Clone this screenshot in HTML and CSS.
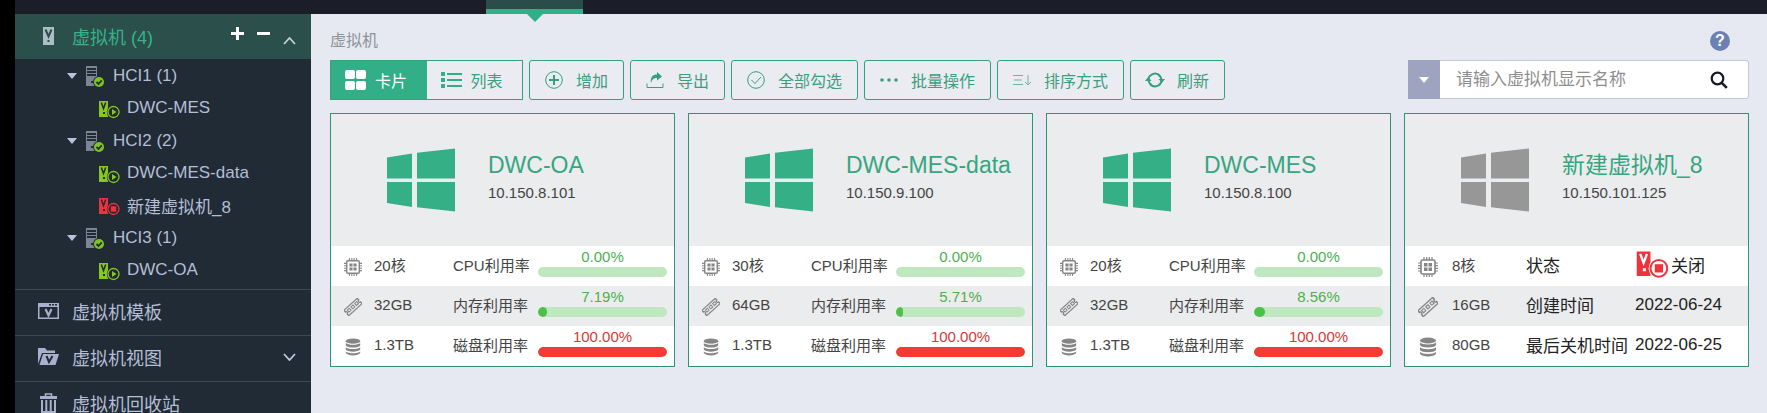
FILE: index.html
```html
<!DOCTYPE html>
<html lang="zh-CN">
<head>
    <meta charset="utf-8" />
    <title>虚拟机</title>
    <link rel="stylesheet" href="styles.css">
</head>
<body>
    <svg class="defs" aria-hidden="true">
        <symbol id="i-host" viewBox="0 0 20 22">
            <path fill="#7c8594" d="M1 0h11v20H1z" />
            <path fill="#212b35" d="M2 2h9v2H2zM2 5h9v2H2zM2 8h9v2H2zM6 15h2v2H6z" />
            <circle cx="14" cy="16" r="6" fill="#212b35" />
            <circle cx="14" cy="16" r="5" fill="#7dc41f" />
            <path fill="none" stroke="#212b35" stroke-width="1.8" d="M11.5 16l2 2 3.2-3.6" />
        </symbol>
        <symbol id="i-vm" viewBox="0 0 22 19">
            <path fill="currentColor" d="M1 1h9v16H1z" />
            <path fill="none" stroke="var(--hole)" stroke-width="1.5" d="M3.300 2.500l2.200 6 2.200-6" />
            <path fill="var(--hole)" d="M5 12h2v2H5z" />
            <circle cx="15.500" cy="12" r="6.700" fill="var(--hole)" />
            <circle cx="15.500" cy="12" r="5.500" fill="none" stroke="currentColor" stroke-width="1.300" />
        </symbol>
        <symbol id="i-vm-on" viewBox="0 0 22 19">
            <use href="#i-vm" width="22" height="19" />
            <path fill="currentColor" d="M14 9l4.500 3-4.500 3z" />
        </symbol>
        <symbol id="i-vm-off" viewBox="0 0 22 19">
            <use href="#i-vm" width="22" height="19" />
            <path fill="currentColor" d="M12.800 9.300h5.400v5.400h-5.400z" />
        </symbol>
        <symbol id="i-win" viewBox="0 0 68 63">
            <path fill="currentColor" d="M0 9l25-4v25H0zM30 4.300L68 0v30H30zM0 33.500h25v25L0 54.500zM30 33.500h38V63l-38-4.300z" />
        </symbol>
        <symbol id="i-cpu" viewBox="0 0 20 20">
            <rect x="3" y="3" width="14" height="14" rx="1.500" fill="none" stroke="currentColor" stroke-width="1.600" />
            <path fill="currentColor" d="M6 6h3.500v3.500H6zM10.500 6H14v3.500h-3.500zM6 10.500h3.500V14H6zM10.500 10.500H14V14h-3.500z" />
            <path stroke="currentColor" stroke-width="1.200" d="M6 0v3M8.700 0v3M11.300 0v3M14 0v3M6 17v3M8.700 17v3M11.300 17v3M14 17v3M0 6h3M0 8.700h3M0 11.300h3M0 14h3M17 6h3M17 8.700h3M17 11.300h3M17 14h3" />
        </symbol>
        <symbol id="i-mem" viewBox="0 0 20 20">
            <g transform="rotate(-42 10 10)" fill="none" stroke="currentColor">
                <path stroke-width="1.400" d="M0 6h20v2.500a1.500 1.500 0 0 0 0 3V14H0v-2.500a1.500 1.500 0 0 0 0-3z" />
                <path stroke-width="1.100" d="M3 8.300h3v3H3zM8.500 8.300h3v3h-3zM14 8.300h3v3h-3z" />
            </g>
        </symbol>
        <symbol id="i-disk" viewBox="0 0 20 20">
            <ellipse cx="10" cy="3.500" rx="8" ry="3" fill="currentColor" />
            <path fill="currentColor" d="M2 5.500c2 2.600 14 2.600 16 0v2.700c-2 3-14 3-16 0zM2 10.200c2 2.600 14 2.600 16 0v2.700c-2 3-14 3-16 0zM2 15c2 2.600 14 2.600 16 0v1.800c-2 3.600-14 3.600-16 0z" />
        </symbol>
    </svg>

    <header class="topbar">
        <div class="topbar-tab"></div>
    </header>

    <div class="layout">
        <nav class="sidebar">
            <div class="side-head">
                <svg class="side-icon" viewBox="0 0 21 20">
                    <path fill="#a9bfc4" d="M5 1h11v18H5z" />
                    <path fill="none" stroke="#2c4e4a" stroke-width="2" d="M7.500 3.500l3 7 3-7" />
                    <path fill="#2c4e4a" d="M9.500 14h2v2h-2z" />
                </svg>
                <a class="side-title" href="#">虚拟机 (4)</a>
                <div class="side-tools">
                    <button type="button" aria-label="展开">
                        <svg width="13" height="13" viewBox="0 0 13 13"><path stroke="#fff" stroke-width="3" d="M0 6.500h13M6.500 0v13" /></svg>
                    </button>
                    <button type="button" aria-label="收起">
                        <svg width="13" height="13" viewBox="0 0 13 13"><path stroke="#fff" stroke-width="3" d="M0 6.500h13" /></svg>
                    </button>
                    <button type="button" class="fold" aria-label="折叠">
                        <svg width="13" height="8" viewBox="0 0 13 8"><path fill="none" stroke="#c4d2d6" stroke-width="1.800" d="M1 7l5.500-6L12 7" /></svg>
                    </button>
                </div>
            </div>
            <ul class="tree">
                <li>
                    <a class="host" href="#"><span class="caret"></span><svg class="host-icon"><use href="#i-host" /></svg>HCI1 (1)</a>
                    <ul>
                        <li><a class="vm" href="#"><svg class="vm-icon on"><use href="#i-vm-on" /></svg>DWC-MES</a></li>
                    </ul>
                </li>
                <li>
                    <a class="host" href="#"><span class="caret"></span><svg class="host-icon"><use href="#i-host" /></svg>HCI2 (2)</a>
                    <ul>
                        <li><a class="vm" href="#"><svg class="vm-icon on"><use href="#i-vm-on" /></svg>DWC-MES-data</a></li>
                        <li><a class="vm" href="#"><svg class="vm-icon off"><use href="#i-vm-off" /></svg>新建虚拟机_8</a></li>
                    </ul>
                </li>
                <li>
                    <a class="host" href="#"><span class="caret"></span><svg class="host-icon"><use href="#i-host" /></svg>HCI3 (1)</a>
                    <ul>
                        <li><a class="vm" href="#"><svg class="vm-icon on"><use href="#i-vm-on" /></svg>DWC-OA</a></li>
                    </ul>
                </li>
            </ul>
            <a class="side-item" href="#">
                <svg class="side-icon" viewBox="0 0 21 20">
                    <path fill="#a7b1cb" fill-rule="evenodd" d="M0 2h21v16H0zM1.500 6v10.500h18V6z" />
                    <path fill="#212b35" d="M11 3h2v1.500h-2zM14 3h2v1.500h-2zM17 3h2v1.500h-2z" />
                    <path fill="none" stroke="#a7b1cb" stroke-width="2.200" d="M7.500 8l3 6.500 3-6.500" />
                </svg>
                虚拟机模板
            </a>
            <a class="side-item" href="#">
                <svg class="side-icon" viewBox="0 0 21 20">
                    <path fill="#a7b1cb" d="M0 17V1h7l2 2.500h8V6H4z" />
                    <path fill="#a7b1cb" d="M5 7h16l-3.500 11H1.500z" />
                    <path fill="none" stroke="#212b35" stroke-width="2" d="M8.500 9l2.500 6 3.500-6" />
                </svg>
                虚拟机视图
                <svg class="side-arrow" width="13" height="8" viewBox="0 0 13 8"><path fill="none" stroke="#c0c9dc" stroke-width="1.800" d="M1 1l5.500 6L12 1" /></svg>
            </a>
            <a class="side-item" href="#">
                <svg class="side-icon" viewBox="0 0 21 20">
                    <path fill="none" stroke="#a7b1cb" stroke-width="1.600" d="M7.500 3V1h6v2" />
                    <path fill="#a7b1cb" d="M2 3h17v3H2z" />
                    <path fill="none" stroke="#a7b1cb" stroke-width="2" d="M4 7v12h13V7M8.300 7v11M12.700 7v11" />
                </svg>
                虚拟机回收站
            </a>
        </nav>

        <main class="main">
            <div class="crumb">
                <span class="crumb-text">虚拟机</span>
                <button type="button" class="help" aria-label="帮助">?</button>
            </div>

            <div class="toolbar">
                <div class="view-switch">
                    <button type="button" class="view active">
                        <svg viewBox="0 0 21 20"><rect width="10" height="9" rx="2" /><rect x="11" width="10" height="9" rx="2" /><rect y="11" width="10" height="9" rx="2" /><rect x="11" y="11" width="10" height="9" rx="2" /></svg>
                        卡片
                    </button>
                    <button type="button" class="view">
                        <svg viewBox="0 0 21 20"><path d="M0 2h4v4H0zM0 8h4v4H0zM0 14h4v4H0zM6 3h15v2H6zM6 9h15v2H6zM6 15h15v2H6z" /></svg>
                        列表
                    </button>
                </div>
                <button type="button" class="btn">
                    <svg viewBox="0 0 20 20"><g class="line"><circle cx="10" cy="10" r="8.300" /><path d="M5 10h10M10 5v10" stroke-width="2" /></g></svg>
                    增加
                </button>
                <button type="button" class="btn">
                    <svg viewBox="0 0 20 20"><path d="M6 13c-1-6 2-8.500 6-8.500V2l5 4.500-5 4V8c-3 0-5 1-6 5z" /><path class="line" d="M2 13.500v4h16v-4" /></svg>
                    导出
                </button>
                <button type="button" class="btn">
                    <svg viewBox="0 0 20 20"><g class="line"><circle cx="10" cy="10" r="8.300" /><path d="M5.500 10l3.500 3.500 6-6.500" /></g></svg>
                    全部勾选
                </button>
                <button type="button" class="btn">
                    <svg viewBox="0 0 20 20"><circle cx="3" cy="10" r="1.800" /><circle cx="10" cy="10" r="1.800" /><circle cx="17" cy="10" r="1.800" /></svg>
                    批量操作
                </button>
                <button type="button" class="btn">
                    <svg viewBox="0 0 20 20"><path class="line thin" d="M1 5.500h10M2 10h8M1 14.500h10M16 5v10M13 12l3 3 3-3" /></svg>
                    排序方式
                </button>
                <button type="button" class="btn">
                    <svg viewBox="0 0 20 20"><path class="line" stroke-width="2" d="M3.500 10.500a6.500 6.500 0 0 1 11.500-4.500M16.500 9.500a6.500 6.500 0 0 1-11.500 4.500" /><path class="line" stroke-width="2" d="M14 5.300a6.500 6.500 0 0 1 2.500 4.700M6 14.700A6.500 6.500 0 0 1 3.500 10" /><path d="M13.500 9H20l-3.200 4zM0 11h6.500L3.200 7z" /></svg>
                    刷新
                </button>
                <form class="search">
                    <button type="button" class="search-type" aria-label="搜索条件"><span class="caret"></span></button>
                    <input type="text" class="search-input" aria-label="请输入虚拟机显示名称" placeholder="请输入虚拟机显示名称" />
                    <button type="submit" class="search-go" aria-label="搜索">
                        <svg width="18" height="18" viewBox="0 0 18 18"><circle cx="7.500" cy="7.500" r="5.800" fill="none" stroke="#151b26" stroke-width="2.200" /><path stroke="#151b26" stroke-width="2.600" d="M11.800 11.800l5 5" /></svg>
                    </button>
                </form>
            </div>

            <div class="cards">
                <section class="card">
                    <div class="card-head">
                        <svg class="os"><use href="#i-win" /></svg>
                        <div>
                            <a class="name" href="#">DWC-OA</a>
                            <div class="ip">10.150.8.101</div>
                        </div>
                    </div>
                    <table class="spec">
                        <tr>
                            <td class="c-icon"><svg class="spec-icon"><use href="#i-cpu" /></svg></td>
                            <td class="c-size">20核</td>
                            <td class="c-label">CPU利用率</td>
                            <td class="c-use"><div class="pct">0.00%</div><div class="bar"><div class="fill" style="width:0%"></div></div></td>
                        </tr>
                        <tr>
                            <td><svg class="spec-icon"><use href="#i-mem" /></svg></td>
                            <td>32GB</td>
                            <td>内存利用率</td>
                            <td class="c-use"><div class="pct">7.19%</div><div class="bar"><div class="fill" style="width:7.19%"></div></div></td>
                        </tr>
                        <tr>
                            <td><svg class="spec-icon"><use href="#i-disk" /></svg></td>
                            <td>1.3TB</td>
                            <td>磁盘利用率</td>
                            <td class="c-use full"><div class="pct">100.00%</div><div class="bar"><div class="fill" style="width:100%"></div></div></td>
                        </tr>
                    </table>
                </section>

                <section class="card">
                    <div class="card-head">
                        <svg class="os"><use href="#i-win" /></svg>
                        <div>
                            <a class="name" href="#">DWC-MES-data</a>
                            <div class="ip">10.150.9.100</div>
                        </div>
                    </div>
                    <table class="spec">
                        <tr>
                            <td class="c-icon"><svg class="spec-icon"><use href="#i-cpu" /></svg></td>
                            <td class="c-size">30核</td>
                            <td class="c-label">CPU利用率</td>
                            <td class="c-use"><div class="pct">0.00%</div><div class="bar"><div class="fill" style="width:0%"></div></div></td>
                        </tr>
                        <tr>
                            <td><svg class="spec-icon"><use href="#i-mem" /></svg></td>
                            <td>64GB</td>
                            <td>内存利用率</td>
                            <td class="c-use"><div class="pct">5.71%</div><div class="bar"><div class="fill" style="width:5.71%"></div></div></td>
                        </tr>
                        <tr>
                            <td><svg class="spec-icon"><use href="#i-disk" /></svg></td>
                            <td>1.3TB</td>
                            <td>磁盘利用率</td>
                            <td class="c-use full"><div class="pct">100.00%</div><div class="bar"><div class="fill" style="width:100%"></div></div></td>
                        </tr>
                    </table>
                </section>

                <section class="card">
                    <div class="card-head">
                        <svg class="os"><use href="#i-win" /></svg>
                        <div>
                            <a class="name" href="#">DWC-MES</a>
                            <div class="ip">10.150.8.100</div>
                        </div>
                    </div>
                    <table class="spec">
                        <tr>
                            <td class="c-icon"><svg class="spec-icon"><use href="#i-cpu" /></svg></td>
                            <td class="c-size">20核</td>
                            <td class="c-label">CPU利用率</td>
                            <td class="c-use"><div class="pct">0.00%</div><div class="bar"><div class="fill" style="width:0%"></div></div></td>
                        </tr>
                        <tr>
                            <td><svg class="spec-icon"><use href="#i-mem" /></svg></td>
                            <td>32GB</td>
                            <td>内存利用率</td>
                            <td class="c-use"><div class="pct">8.56%</div><div class="bar"><div class="fill" style="width:8.56%"></div></div></td>
                        </tr>
                        <tr>
                            <td><svg class="spec-icon"><use href="#i-disk" /></svg></td>
                            <td>1.3TB</td>
                            <td>磁盘利用率</td>
                            <td class="c-use full"><div class="pct">100.00%</div><div class="bar"><div class="fill" style="width:100%"></div></div></td>
                        </tr>
                    </table>
                </section>

                <section class="card stopped">
                    <div class="card-head">
                        <svg class="os"><use href="#i-win" /></svg>
                        <div>
                            <a class="name" href="#">新建虚拟机_8</a>
                            <div class="ip">10.150.101.125</div>
                        </div>
                    </div>
                    <table class="spec">
                        <tr>
                            <td class="c-icon"><svg class="spec-icon"><use href="#i-cpu" /></svg></td>
                            <td class="c-size">8核</td>
                            <td class="c-label">状态</td>
                            <td class="c-value"><span class="state"><svg class="state-icon"><use href="#i-vm-off" /></svg>关闭</span></td>
                        </tr>
                        <tr>
                            <td><svg class="spec-icon"><use href="#i-mem" /></svg></td>
                            <td>16GB</td>
                            <td class="c-label">创建时间</td>
                            <td class="c-value">2022-06-24</td>
                        </tr>
                        <tr>
                            <td><svg class="spec-icon"><use href="#i-disk" /></svg></td>
                            <td>80GB</td>
                            <td class="c-label">最后关机时间</td>
                            <td class="c-value">2022-06-25</td>
                        </tr>
                    </table>
                </section>
            </div>
        </main>
    </div>
</body>
</html>
```

FILE: styles.css
```css
* {
    box-sizing: border-box;
}
body {
    display: flex;
    flex-direction: column;
    height: 100vh;
    margin: 0;
    padding-left: 15px;
    overflow: hidden;
    background: #000;
    color: #444;
    font-family: "Liberation Sans", "Noto Sans CJK SC", sans-serif;
    font-size: 15px;
}
a {
    color: inherit;
    text-decoration: none;
}
button, input {
    margin: 0;
    padding: 0;
    border: 0;
    background: none;
    font-family: inherit;
}
ul {
    margin: 0;
    padding: 0;
    list-style: none;
}
svg {
    flex: none;
}
.defs {
    display: none;
}
.caret {
    flex: none;
    border: 5px solid transparent;
    border-top: 6px solid #b9c3dc;
    border-bottom: 0;
}

/* top bar */
.topbar {
    flex: none;
    height: 14px;
    padding-left: 471px;
    background: #1b1e29;
}
.topbar-tab {
    position: relative;
    width: 97px;
    height: 14px;
    background: #2b4d49;
    border-bottom: 5px solid #33af87;
}
    .topbar-tab::after {
        content: "";
        position: absolute;
        top: 14px;
        left: 41px;
        z-index: 1;
        border: 8px solid transparent;
        border-top-color: #33af87;
        border-bottom: 0;
    }
.layout {
    display: flex;
    flex: 1;
    min-height: 0;
}

/* sidebar */
.sidebar {
    --hole: #212b35;
    flex: none;
    width: 296px;
    background: #212b35;
    color: #b4bed6;
    overflow: hidden;
}
.side-head {
    display: flex;
    align-items: center;
    height: 45px;
    padding: 0 15px 2px 23px;
    background: #2b4f4a;
    font-size: 18px;
}
.side-icon {
    width: 21px;
    height: 20px;
    margin-right: 13px;
}
.side-title {
    color: #36b38b;
}
.side-tools {
    display: flex;
    align-items: center;
    gap: 13px;
    margin-left: auto;
}
    .side-tools button {
        display: flex;
        height: 18px;
    }
    .side-tools .fold {
        align-items: flex-end;
    }
.tree {
    padding-bottom: 3px;
    font-size: 17px;
}
.host, .vm {
    display: flex;
    align-items: center;
}
.host {
    height: 33px;
    padding-left: 52px;
}
.vm {
    height: 32px;
    padding-left: 83px;
}
.host-icon {
    width: 20px;
    height: 22px;
    margin: 3px 8px 0;
}
.vm-icon {
    width: 22px;
    height: 19px;
    margin: 3px 7px 0 0;
}
.on {
    color: #86c91c;
}
.off {
    color: #f0323c;
}
.side-item {
    display: flex;
    align-items: center;
    height: 46px;
    padding: 0 15px 3px 23px;
    border-top: 1px solid #3c4954;
    font-size: 18px;
}
.side-arrow {
    margin-left: auto;
}

/* main */
.main {
    flex: 1;
    min-width: 0;
    padding: 15px 18px 0 19px;
    background: #e6e9f2;
}
.crumb {
    display: flex;
    align-items: center;
    justify-content: space-between;
    height: 24px;
    margin-bottom: 7px;
    padding-right: 19px;
    color: #8f9298;
    font-size: 16px;
}
.crumb-text {
    padding-bottom: 4px;
}
.help {
    width: 20px;
    height: 20px;
    border-radius: 50%;
    background: #6c81b3;
    color: #fff;
    font-size: 16px;
    font-weight: bold;
    line-height: 20px;
}
.toolbar {
    display: flex;
    gap: 6px;
    height: 40px;
    margin-bottom: 13px;
}
.view-switch {
    display: flex;
    width: 193px;
    border: 1px solid #33a17d;
    background: #ebecf1;
}
.view, .btn {
    display: flex;
    align-items: center;
    color: #3a9f7e;
    font-size: 16px;
    white-space: nowrap;
}
.view {
    flex: 1;
    gap: 9px;
    padding: 0 0 1px 14px;
}
    .view svg {
        width: 21px;
        height: 20px;
        fill: #33af87;
    }
    .view.active {
        background: #33af87;
        color: #fff;
    }
    .view.active svg {
        fill: #fff;
    }
.btn {
    gap: 12px;
    padding: 0 15px 1px 14px;
    border: 1px solid #33a17d;
    border-radius: 3px;
    background: #ebecf1;
}
    .btn svg {
        width: 20px;
        height: 20px;
        fill: #33a17d;
    }
    .btn .line {
        fill: none;
        stroke: #33a17d;
    }
    .btn .thin {
        stroke: #6cb79f;
    }
.search {
    display: flex;
    width: 341px;
    height: 39px;
    margin-left: auto;
}
.search-type {
    display: flex;
    align-items: center;
    justify-content: center;
    width: 32px;
    background: #9ea3bf;
}
    .search-type .caret {
        border-top-color: #fff;
    }
.search-input {
    flex: 1;
    min-width: 0;
    padding-left: 16px;
    border: 1px solid #c3c8de;
    border-width: 1px 0;
    background: #fff;
    font-size: 17px;
}
    .search-input::placeholder {
        color: #8e8e8e;
    }
.search-go {
    display: flex;
    align-items: center;
    width: 39px;
    border: 1px solid #c3c8de;
    border-left: 0;
    border-radius: 0 3px 3px 0;
    background: #fff;
}

/* cards */
.cards {
    display: grid;
    grid-template-columns: repeat(4, 1fr);
    gap: 13px;
}
.card {
    min-width: 0;
    border: 1px solid #2f9473;
    background: #fff;
}
.card-head {
    display: flex;
    align-items: center;
    gap: 33px;
    height: 132px;
    padding: 0 0 8px 56px;
    background: #ebeced;
}
.os {
    width: 68px;
    height: 64px;
    margin-top: 8px;
    color: #35b086;
}
.name {
    display: block;
    color: #35a680;
    font-size: 23px;
    line-height: 34px;
    white-space: nowrap;
}
.ip {
    line-height: 22px;
}
.spec {
    width: 100%;
    border-collapse: collapse;
    table-layout: fixed;
}
    .spec tr {
        height: 40px;
    }
    .spec tr:nth-child(2) {
        background: #ebeced;
    }
    .spec td {
        padding: 0 0 3px;
        white-space: nowrap;
    }
.c-icon {
    width: 43px;
}
.c-size {
    width: 79px;
}
.c-label {
    width: 85px;
}
.spec-icon {
    display: block;
    width: 18px;
    height: 18px;
    margin: 4px 0 0 13px;
    color: #858585;
}
.spec .c-use {
    padding: 0 7px 8px 0;
}
.pct {
    color: #4bb04f;
    line-height: 20px;
    text-align: center;
}
.bar {
    height: 10px;
    border-radius: 5px;
    background: #bfe7c0;
    overflow: hidden;
}
.fill {
    height: 10px;
    border-radius: 5px;
    background: #4dc04b;
}
.full .pct {
    color: #d63a35;
}
.full .fill {
    background: #f43a33;
}

/* powered off */
.stopped .os {
    color: #979797;
}
.stopped .c-icon {
    width: 47px;
}
.stopped .c-size {
    width: 74px;
}
.stopped .c-label {
    width: 109px;
}
.stopped .spec-icon {
    width: 20px;
    height: 20px;
}
.stopped .c-label, .stopped .c-value {
    color: #222;
    font-size: 17px;
}
.state {
    display: flex;
    align-items: center;
    gap: 2px;
}
.state-icon {
    --hole: #fff;
    width: 34px;
    height: 29px;
    color: #f0323c;
}
```
